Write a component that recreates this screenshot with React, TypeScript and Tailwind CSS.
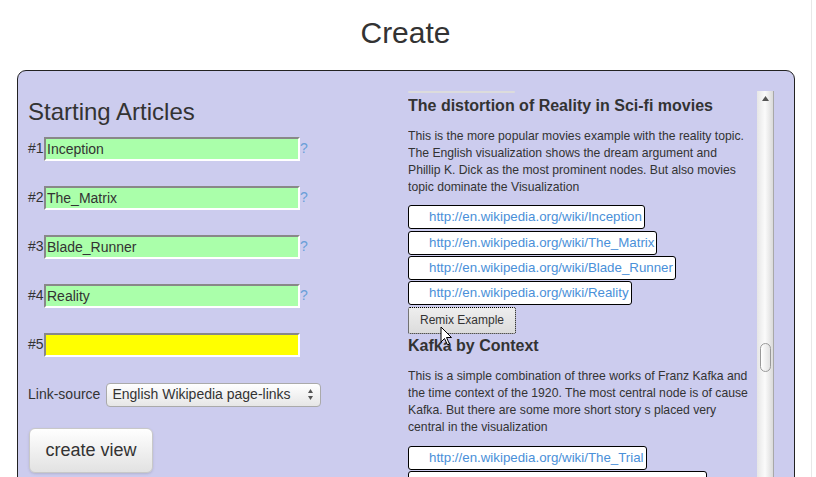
const articles = [
  { n: 1, value: 'Inception', help: true },
  { n: 2, value: 'The_Matrix', help: true },
  { n: 3, value: 'Blade_Runner', help: true },
  { n: 4, value: 'Reality', help: true },
  { n: 5, value: '', help: false },
]

const examples = [
  {
    title: 'The distortion of Reality in Sci-fi movies',
    text: 'This is the more popular movies example with the reality topic. The English visualization shows the dream argument and Phillip K. Dick as the most prominent nodes. But also movies topic dominate the Visualization',
    links: ['Inception', 'The_Matrix', 'Blade_Runner', 'Reality'],
  },
  {
    title: 'Kafka by Context',
    text: 'This is a simple combination of three works of Franz Kafka and the time context of the 1920. The most central node is of cause Kafka. But there are some more short story s placed very central in the visualization',
    links: ['The_Trial', 'The_Castle_(novel)'],
  },
]

function ArticleRow({ n, value, help }: { n: number; value: string; help: boolean }) {
  return (
    <div className="flex items-center h-[24px] text-[14px]">
      <span className="w-[16px]">#{n}</span>
      <input
        readOnly
        value={value}
        className={
          'w-[256px] h-[24px] border-2 border-t-[#888] border-l-[#888] border-b-white border-r-white pl-[1px] text-[14px] text-[#333] outline-none ' +
          (n === 5 ? 'bg-[#ffff00]' : 'bg-[#aaffaa]')
        }
      />
      {help && <span className="text-[#6a9fd8]">?</span>}
    </div>
  )
}

function Example({ title, text, links, first }: { title: string; text: string; links: string[]; first: boolean }) {
  return (
    <div className={first ? 'mt-[3.5px]' : 'mt-[3px]'}>
      <h3 className="text-[16px] leading-[17.6px] font-bold">{title}</h3>
      <p className="mt-[13.5px] w-[342px] text-[12.2px] leading-[17.2px]">{text}</p>
      <div className="mt-[9px] flex flex-col items-start gap-[1.35px]">
        {links.map((l) => (
          <div
            key={l}
            className="inline-flex items-center h-[24px] pl-[20px] pr-[2px] bg-white border border-black rounded-[3px] text-[13.3px] text-[#4a90d9] whitespace-nowrap"
          >
            http://en.wikipedia.org/wiki/{l}
          </div>
        ))}
        <button className="w-[108px] h-[27px] border border-dotted border-black rounded-[2px] bg-gradient-to-b from-[#eeeeee] to-[#dcdcdc] text-[12px] text-[#333]">
          Remix Example
        </button>
      </div>
    </div>
  )
}

export default function App() {
  return (
    <div className="h-[477px] overflow-hidden bg-white font-['Liberation_Sans',Arial,sans-serif] text-[#333]">
      <div className="w-[812px] h-full border-r border-[#e8e8e8]">
        <h1 className="pt-4 text-center text-[30px] leading-[33px] font-normal">Create</h1>

        <div className="mt-[21px] ml-[17px] w-[778px] h-[460px] flex rounded-[9px] border border-[#222] bg-[#ccccee] pt-[20px] pl-[10px] pr-[20px]">
          {/* left form */}
          <div className="w-[380px] shrink-0">
            <h2 className="mt-[8px] text-[24px] leading-[26.4px]">Starting Articles</h2>
            <div className="mt-[11.3px] flex flex-col gap-[25px]">
              {articles.map((a) => (
                <ArticleRow key={a.n} {...a} />
              ))}
            </div>

            <div className="mt-[26px] flex items-center text-[14px]">
              <span>Link-source</span>
              <div className="ml-[6px] w-[215px] h-[24px] flex items-center justify-between rounded-[4px] border border-[#aaa] bg-gradient-to-b from-white to-[#e6e6e6] pl-[5px] pr-[7px]">
                <span>English Wikipedia page-links</span>
                <span className="flex flex-col gap-[3px]">
                  <svg width="5" height="4" viewBox="0 0 5 4"><path d="M2.5 0L5 4H0Z" fill="#555" /></svg>
                  <svg width="5" height="4" viewBox="0 0 5 4"><path d="M0 0H5L2.5 4Z" fill="#555" /></svg>
                </span>
              </div>
            </div>

            <button className="mt-[21px] ml-[1px] w-[124px] h-[45px] rounded-[6px] border border-[#c8c8c8] bg-gradient-to-b from-white to-[#e2e2e2] text-[18px] text-[#333] shadow-sm">
              create view
            </button>
          </div>

          {/* examples list with scrollbar */}
          <div className="relative flex w-[366px]">
            <div className="w-[349px] overflow-hidden">
              <div className="h-[2px] w-[107px] rounded-full bg-[#dcdcdc]" />
              {examples.map((e, i) => (
                <Example key={e.title} {...e} first={i === 0} />
              ))}
            </div>
            <div className="relative w-[17px] h-full border-r border-[#a8a8a8] bg-gradient-to-r from-[#e6e6e6] via-[#fbfbfb] to-[#dadada]">
              <svg className="absolute left-[5px] top-[5px]" width="7" height="5" viewBox="0 0 7 5">
                <path d="M3.5 0L7 5H0Z" fill="#555" />
              </svg>
              <div className="absolute left-[3px] top-[252px] w-[11px] h-[29px] rounded-full border border-[#999] bg-gradient-to-r from-white to-[#e2e2e2]" />
            </div>

            {/* mouse pointer */}
            <svg className="absolute left-[32px] top-[235px]" width="13" height="20" viewBox="0 0 13 20">
              <path d="M1 1L1 16L4.5 12.5L7.5 19L9.5 18L6.5 11.5L11.5 11.5Z" fill="white" stroke="black" strokeWidth="1" strokeLinejoin="round" />
            </svg>
          </div>
        </div>
      </div>
    </div>
  )
}
